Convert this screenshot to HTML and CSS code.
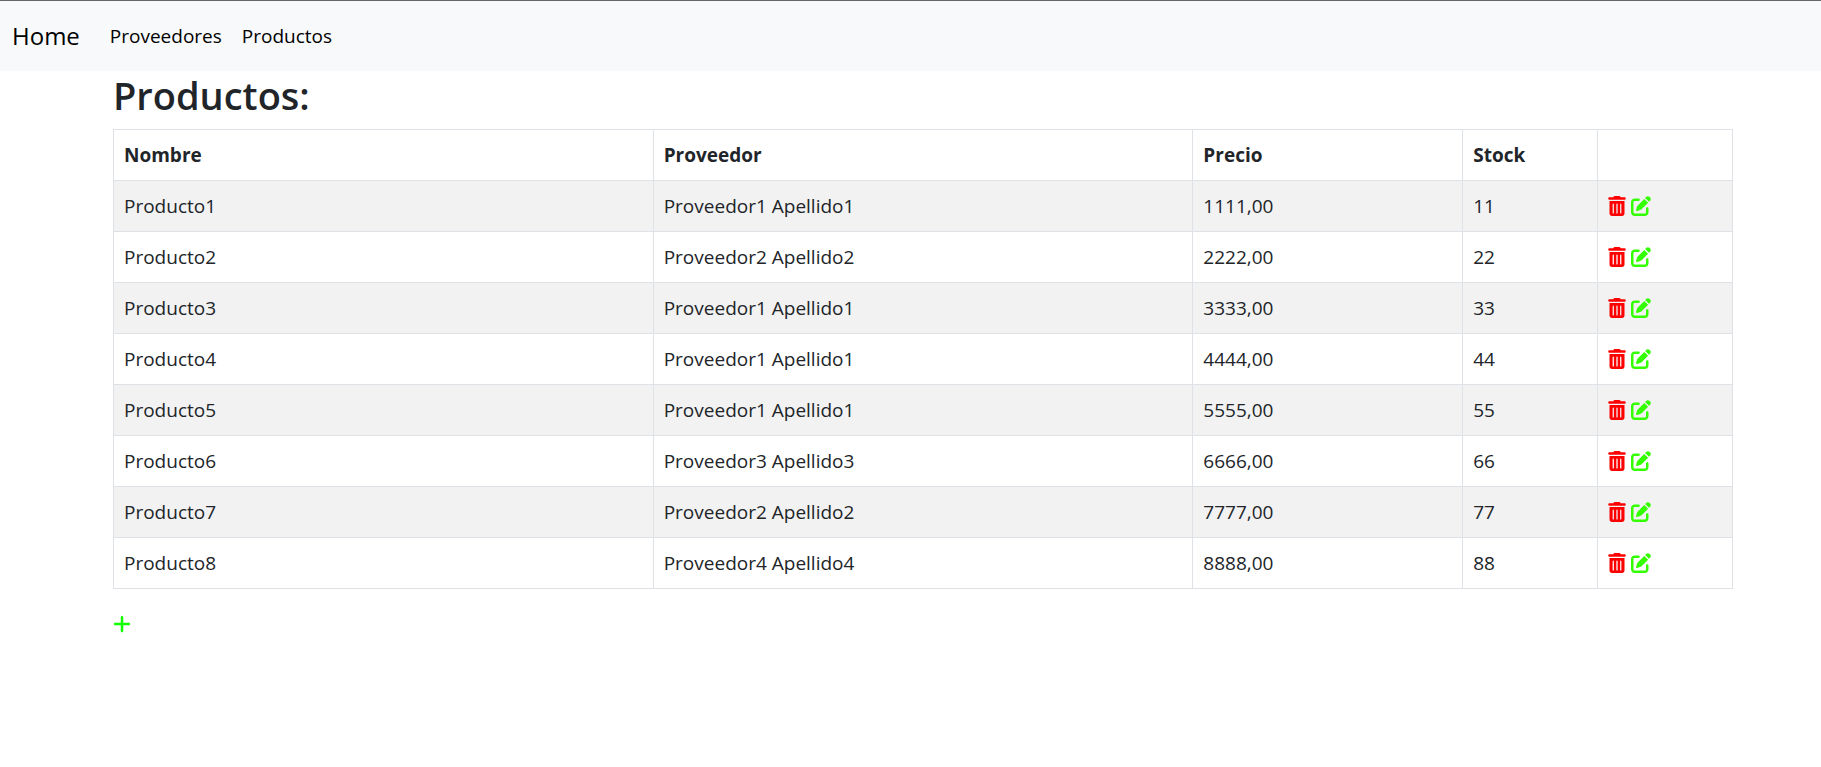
FILE: index.html
```html
<!DOCTYPE html>
<html lang="es">
<head>
<meta charset="utf-8">
<meta name="viewport" content="width=device-width, initial-scale=1">
<title>Productos</title>
<link rel="stylesheet" href="styles.css">
</head>
<body>
<svg class="sprite" aria-hidden="true">
  <symbol id="trash" viewBox="0 0 448 512"><path d="M135.2 17.7C140.6 6.8 151.7 0 163.8 0H284.2c12.1 0 23.2 6.8 28.6 17.7L320 32h96c17.7 0 32 14.3 32 32s-14.3 32-32 32H32C14.3 96 0 81.7 0 64S14.3 32 32 32h96l7.2-14.3zM32 128H416V448c0 35.3-28.7 64-64 64H96c-35.3 0-64-28.7-64-64V128zm96 64c-8.8 0-16 7.2-16 16V432c0 8.8 7.2 16 16 16s16-7.2 16-16V208c0-8.800-7.2-16-16-16zm96 0c-8.800 0-16 7.2-16 16V432c0 8.800 7.2 16 16 16s16-7.2 16-16V208c0-8.800-7.200-16-16-16zm96 0c-8.800 0-16 7.200-16 16V432c0 8.800 7.200 16 16 16s16-7.200 16-16V208c0-8.800-7.200-16-16-16z"/></symbol>
  <symbol id="edit" viewBox="0 0 512 512"><path d="M471.6 21.7c-21.9-21.9-57.3-21.9-79.2 0L362.3 51.7l97.9 97.9 30.1-30.1c21.9-21.9 21.9-57.3 0-79.2L471.6 21.7zm-299.2 220c-6.1 6.1-10.8 13.6-13.5 21.9l-29.6 88.8c-2.9 8.6-.6 18.1 5.8 24.6s15.9 8.7 24.6 5.8l88.8-29.6c8.2-2.7 15.7-7.4 21.9-13.5L437.7 172.3 339.7 74.3 172.4 241.7zM96 64C43 64 0 107 0 160V416c0 53 43 96 96 96H352c53 0 96-43 96-96V320c0-17.7-14.3-32-32-32s-32 14.3-32 32v96c0 17.7-14.3 32-32 32H96c-17.7 0-32-14.3-32-32V160c0-17.7 14.3-32 32-32h96c17.7 0 32-14.3 32-32s-14.3-32-32-32H96z"/></symbol>
  <symbol id="plus" viewBox="0 0 448 512"><path d="M256 80c0-17.7-14.3-32-32-32s-32 14.3-32 32V224H48c-17.7 0-32 14.3-32 32s14.3 32 32 32H192V432c0 17.7 14.3 32 32 32s32-14.3 32-32V288H400c17.7 0 32-14.3 32-32s-14.3-32-32-32H256V80z"/></symbol>
</svg>
<nav class="navbar">
  <a class="brand" href="#">Home</a>
  <a class="nav-link" href="#">Proveedores</a>
  <a class="nav-link" href="#">Productos</a>
</nav>
<main class="container">
  <h1 class="title">Productos:</h1>
  <table class="table">
    <colgroup><col class="col-wide"><col class="col-wide"><col class="col-price"><col class="col-small"><col class="col-small"></colgroup>
    <thead>
      <tr><th scope="col">Nombre</th><th scope="col">Proveedor</th><th scope="col">Precio</th><th scope="col">Stock</th><td></td></tr>
    </thead>
    <tbody>
      <tr><td>Producto1</td><td>Proveedor1 Apellido1</td><td>1111,00</td><td>11</td><td><div class="actions"><a class="delete" href="#" aria-label="Eliminar Producto1"><svg class="icon narrow"><use href="#trash"/></svg></a><a class="edit" href="#" aria-label="Editar Producto1"><svg class="icon"><use href="#edit"/></svg></a></div></td></tr>
      <tr><td>Producto2</td><td>Proveedor2 Apellido2</td><td>2222,00</td><td>22</td><td><div class="actions"><a class="delete" href="#" aria-label="Eliminar Producto2"><svg class="icon narrow"><use href="#trash"/></svg></a><a class="edit" href="#" aria-label="Editar Producto2"><svg class="icon"><use href="#edit"/></svg></a></div></td></tr>
      <tr><td>Producto3</td><td>Proveedor1 Apellido1</td><td>3333,00</td><td>33</td><td><div class="actions"><a class="delete" href="#" aria-label="Eliminar Producto3"><svg class="icon narrow"><use href="#trash"/></svg></a><a class="edit" href="#" aria-label="Editar Producto3"><svg class="icon"><use href="#edit"/></svg></a></div></td></tr>
      <tr><td>Producto4</td><td>Proveedor1 Apellido1</td><td>4444,00</td><td>44</td><td><div class="actions"><a class="delete" href="#" aria-label="Eliminar Producto4"><svg class="icon narrow"><use href="#trash"/></svg></a><a class="edit" href="#" aria-label="Editar Producto4"><svg class="icon"><use href="#edit"/></svg></a></div></td></tr>
      <tr><td>Producto5</td><td>Proveedor1 Apellido1</td><td>5555,00</td><td>55</td><td><div class="actions"><a class="delete" href="#" aria-label="Eliminar Producto5"><svg class="icon narrow"><use href="#trash"/></svg></a><a class="edit" href="#" aria-label="Editar Producto5"><svg class="icon"><use href="#edit"/></svg></a></div></td></tr>
      <tr><td>Producto6</td><td>Proveedor3 Apellido3</td><td>6666,00</td><td>66</td><td><div class="actions"><a class="delete" href="#" aria-label="Eliminar Producto6"><svg class="icon narrow"><use href="#trash"/></svg></a><a class="edit" href="#" aria-label="Editar Producto6"><svg class="icon"><use href="#edit"/></svg></a></div></td></tr>
      <tr><td>Producto7</td><td>Proveedor2 Apellido2</td><td>7777,00</td><td>77</td><td><div class="actions"><a class="delete" href="#" aria-label="Eliminar Producto7"><svg class="icon narrow"><use href="#trash"/></svg></a><a class="edit" href="#" aria-label="Editar Producto7"><svg class="icon"><use href="#edit"/></svg></a></div></td></tr>
      <tr><td>Producto8</td><td>Proveedor4 Apellido4</td><td>8888,00</td><td>88</td><td><div class="actions"><a class="delete" href="#" aria-label="Eliminar Producto8"><svg class="icon narrow"><use href="#trash"/></svg></a><a class="edit" href="#" aria-label="Editar Producto8"><svg class="icon"><use href="#edit"/></svg></a></div></td></tr>
    </tbody>
  </table>
  <a class="add" href="#" aria-label="Agregar producto"><svg class="icon narrow"><use href="#plus"/></svg></a>
</main>
</body>
</html>
```
FILE: styles.css
```css
* { box-sizing: border-box; }
body {
  margin: 0;
  background: #fff;
  color: #212529;
  font-family: "Segoe UI", "Open Sans", "Noto Sans", sans-serif;
  font-size: 19px;
  line-height: 30px;
}
a { text-decoration: none; }
.sprite { display: none; }
.navbar {
  display: flex;
  align-items: center;
  padding: 10px 12px;
  border-top: 1px solid #66666b;
  background: #f8f9fa;
  color: #000;
}
.brand { margin-right: 20px; font-size: 24px; color: inherit; }
.nav-link { padding: 10px; color: inherit; }
.container {
  max-width: 1675px;
  margin: 0 auto;
  padding: 0 15px 0 40px;
}
.title { margin: 0 0 10px; font-size: 38px; font-weight: 600; line-height: 48px; }
.table {
  width: 100%;
  margin-bottom: 20px;
  border-collapse: collapse;
  table-layout: fixed;
}
.col-wide { width: 33.3333%; }
.col-price { width: 16.6667%; }
.col-small { width: 8.3333%; }
.table th, .table td {
  padding: 10px;
  border: 1px solid #dee2e6;
  text-align: left;
  font-weight: 400;
}
.table th { font-weight: 700; }
.table tbody tr:nth-child(odd) { background: #f2f2f2; }
.actions { display: flex; align-items: center; gap: 5px; height: 30px; }
.actions a, .add { display: flex; }
.icon { width: 20px; height: 20px; fill: currentColor; }
.narrow { width: 18px; }
.delete { color: #f00; }
.edit { color: #3f0; }
.add { width: 18px; height: 30px; align-items: center; color: #1f0; }
```
